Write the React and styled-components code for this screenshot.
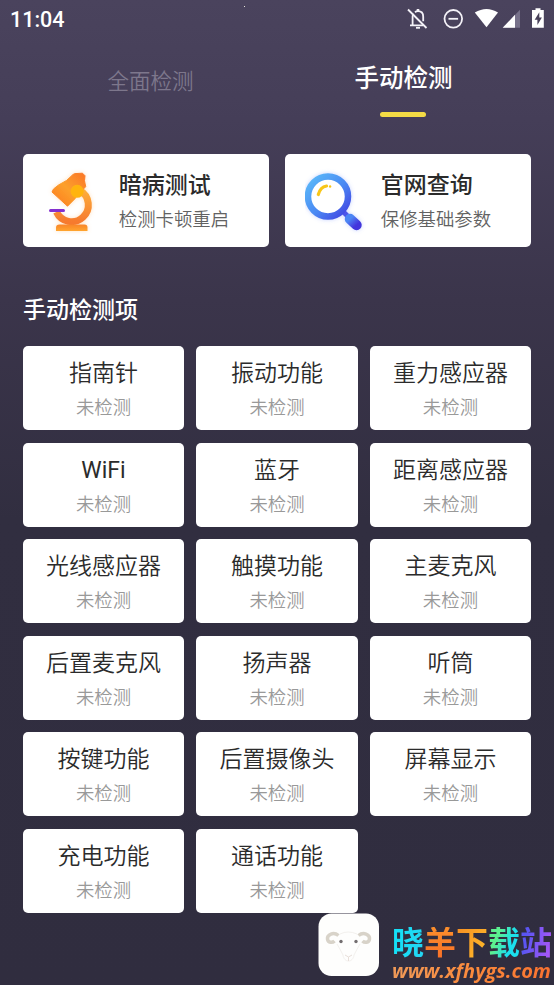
import React from 'react';
import styled, { createGlobalStyle } from 'styled-components';

const GlobalStyle = createGlobalStyle`
  * {
    box-sizing: border-box;
  }
  body {
    margin: 0;
    background: #302d3f;
    font-family: Roboto, 'Noto Sans CJK SC', sans-serif;
  }
`;

const Page = styled.div`
  position: relative;
  width: 554px;
  height: 985px;
  overflow: hidden;
  background: linear-gradient(180deg, #4a435d 0, #453e58 120px, #3b354b 300px, #312e40 520px, #302d3f 100%);
`;

const StatusBar = styled.header`
  display: flex;
  align-items: center;
  justify-content: space-between;
  height: 40px;
  padding: 0 9px 0 10px;
`;
const Clock = styled.div`
  font-size: 21.5px;
  font-weight: 500;
  line-height: 26px;
  color: #ffffff;
`;
const Speck = styled.i`
  position: absolute;
  top: 6px;
  left: 244px;
  width: 1px;
  height: 1px;
  background: #e8e6dc;
`;

const Tabs = styled.nav`
  display: grid;
  grid-template-columns: 1fr 1fr;
  height: 114px;
  padding: 0 24px;
`;
const Tab = styled.div`
  display: flex;
  flex-direction: column;
  align-items: center;
  padding-top: ${(props) => (props.$active ? '21px' : '24px')};
  font-size: ${(props) => (props.$active ? '24.5px' : '21.5px')};
  font-weight: ${(props) => (props.$active ? 500 : 350)};
  line-height: 36px;
  color: ${(props) => (props.$active ? '#ffffff' : '#7d778c')};
`;
const TabLine = styled.span`
  width: 46px;
  height: 5px;
  margin: 15px 2px 0 0;
  border-radius: 3px;
  background: #f4dc45;
`;

const Shortcuts = styled.section`
  display: grid;
  grid-template-columns: 1fr 1fr;
  gap: 16px;
  padding: 0 23px;
`;
const Shortcut = styled.div`
  display: flex;
  align-items: center;
  height: 93px;
  padding-left: 20px;
  border-radius: 5px;
  background: #ffffff;
`;
const ShortcutText = styled.div`
  margin-left: 11.8px;
  padding-top: 5px;
`;
const ShortcutTitle = styled.div`
  font-size: 23px;
  font-weight: 500;
  line-height: 34px;
  color: #2b2b2b;
`;
const ShortcutNote = styled.div`
  font-size: 18.4px;
  font-weight: 350;
  line-height: 34px;
  color: #626262;
`;

const SectionTitle = styled.h2`
  margin: 47px 23px 18.4px;
  font-size: 23px;
  font-weight: 500;
  line-height: 34px;
  color: #ffffff;
`;
const Grid = styled.section`
  display: grid;
  grid-template-columns: repeat(3, 1fr);
  gap: 12.43px;
  padding: 0 23px;
`;
const Item = styled.div`
  height: 84px;
  padding-top: 11px;
  border-radius: 5px;
  background: #ffffff;
  text-align: center;
`;
const ItemName = styled.div`
  font-size: 23px;
  font-weight: ${(props) => (props.$latin ? 400 : 350)};
  line-height: 34px;
  color: #2b2b2b;
`;
const ItemState = styled.div`
  font-size: 18.4px;
  font-weight: 350;
  line-height: 34px;
  color: #999999;
`;

/* site badge floating over the bottom right corner */
const Watermark = styled.div`
  position: absolute;
  left: 318px;
  top: 913px;
  display: flex;
`;
const SiteText = styled.div`
  margin-left: 12px;
  padding-top: 14px;
`;
const SiteName = styled.div`
  display: flex;
  font-size: 32px;
  font-weight: 700;
  line-height: 32px;
`;
const SiteChar = styled.span`
  width: 32px;
  color: transparent;
  background: ${(props) => props.$fill};
  background-clip: text;
`;
const SiteUrl = styled.div`
  padding-right: 4px;
  font-family: 'Open Sans', 'Noto Sans', sans-serif;
  font-size: 20px;
  font-style: italic;
  font-weight: 700;
  line-height: 24px;
  white-space: nowrap;
  color: transparent;
  background: linear-gradient(90deg, #f09a58, #fb8a3c 50%, #f9702f);
  background-clip: text;
`;

const items = [
  '指南针', '振动功能', '重力感应器',
  'WiFi', '蓝牙', '距离感应器',
  '光线感应器', '触摸功能', '主麦克风',
  '后置麦克风', '扬声器', '听筒',
  '按键功能', '后置摄像头', '屏幕显示',
  '充电功能', '通话功能',
];

const siteChars = [
  { char: '晓', fill: 'linear-gradient(100deg, #12e2f8, #25d4f2)' },
  { char: '羊', fill: 'linear-gradient(180deg, #fc8f2c, #f97028)' },
  { char: '下', fill: 'linear-gradient(120deg, #f78e22, #ffbe2c)' },
  { char: '载', fill: 'linear-gradient(110deg, #5cf090 30%, #1be0ee 65%)' },
  { char: '站', fill: 'linear-gradient(100deg, #5a55f2 20%, #b158f8)' },
];

const StatusIcons = () => (
  <svg width="140" height="26" viewBox="405 7 140 26" fill="none">
    <g stroke="#f4f2f8" strokeWidth="1.8">
      <path d="M408 9.5L426.5 28" />
      <path d="M410 25.3h13M412.6 25v-8.500q0-1.500.8-2.800M415 12.200q1.200-1 3-1 5.200 0 5.200 5.500v4.500" />
      <path d="M418 9v2.500" strokeWidth="2.600" />
      <path d="M416 27.800h4" strokeWidth="1.800" />
      <circle cx="453.300" cy="18.800" r="8.800" />
      <path d="M448.500 18.800h9.600" />
    </g>
    <path d="M474.800 12.600q11.800-7.400 23.200 0L486.500 27.200z" fill="#ffffff" />
    <path d="M520 9.800v17.900h-17.300z" fill="#77718a" />
    <path d="M515 14.800v12.900h-12.300z" fill="#ffffff" />
    <path d="M535.500 8.300h5v1.700h3.300v17.700h-11.800V10h3.500z" fill="#ffffff" />
    <path d="M539.300 12.300l-4.600 7.500h2.700v5.300l4.500-7.500h-2.600z" fill="#484059" />
  </svg>
);

const Microscope = () => (
  <svg width="64" height="70" viewBox="43 165 64 70">
    <defs>
      <linearGradient id="arm" x1="0" y1="0" x2="0" y2="1">
        <stop offset="0" stopColor="#fdae3b" />
        <stop offset="1" stopColor="#f67a2e" />
      </linearGradient>
      <linearGradient id="foot" x1="0" y1="0" x2="0" y2="1">
        <stop offset="0" stopColor="#f9852a" />
        <stop offset="1" stopColor="#ffa52e" />
      </linearGradient>
      <linearGradient id="tube" x1="1" y1="0" x2="0" y2="1">
        <stop offset="0" stopColor="#fb7426" />
        <stop offset=".5" stopColor="#fca02c" />
        <stop offset="1" stopColor="#fd781d" />
      </linearGradient>
      <filter id="warmGlow" x="-30%" y="-30%" width="160%" height="160%">
        <feDropShadow dx="0" dy="0" stdDeviation="2" floodColor="#ffb45e" floodOpacity=".4" />
      </filter>
    </defs>
    <g filter="url(#warmGlow)">
      <path d="M80 189.500A16.700 16.700 0 1 1 56.500 211" fill="none" stroke="url(#arm)" strokeWidth="7" />
      <path d="M59.500 223.500h25q3 0 3 3v3.500H56v-3.500q0-3 3.500-3z" fill="url(#foot)" />
      <path d="M66.500 179.500l6.500-6q1.500-1.300 4-1l5.500-.3 2.500 2.500-.5 5 1.200 6-8.700 9-2 3-7.500 7.500L52 191l1.500-3 5-4z" fill="url(#tube)" stroke="url(#tube)" strokeWidth="1" strokeLinejoin="round" />
      <circle cx="77.200" cy="190.300" r="6.500" fill="#ffb411" />
    </g>
    <rect x="49" y="208" width="16" height="3" rx="1.500" fill="#8430cf" />
  </svg>
);

const Magnifier = () => (
  <svg width="64" height="70" viewBox="305.500 165 64 70">
    <defs>
      <linearGradient id="lens" x1="0" y1="0" x2="1" y2="1">
        <stop offset="0" stopColor="#5cbcf9" />
        <stop offset=".55" stopColor="#4a88f3" />
        <stop offset="1" stopColor="#403fe1" />
      </linearGradient>
      <linearGradient id="handle" x1="0" y1="0" x2="1" y2="1">
        <stop offset="0" stopColor="#4c86f4" />
        <stop offset="1" stopColor="#4335dc" />
      </linearGradient>
      <filter id="coolGlow" x="-30%" y="-30%" width="160%" height="160%">
        <feDropShadow dx="0" dy="0" stdDeviation="2" floodColor="#7190ff" floodOpacity=".4" />
      </filter>
    </defs>
    <g filter="url(#coolGlow)">
      <path d="M344 211l6 6" stroke="#4d55ea" strokeWidth="5" />
      <path d="M350.500 218l6.500 6" stroke="url(#handle)" strokeWidth="10.500" strokeLinecap="round" />
      <circle cx="328.500" cy="195.500" r="20" fill="#ffffff" stroke="url(#lens)" strokeWidth="6.500" />
    </g>
    <path d="M318.800 193.500q2-7.500 8.200-8.500" fill="none" stroke="#f8c618" strokeWidth="3.200" strokeLinecap="round" />
    <circle cx="330.600" cy="185.500" r="1.200" fill="#f8c618" />
  </svg>
);

const SheepLogo = () => (
  <svg width="62" height="64" viewBox="0 0 62 64">
    <rect x=".5" y=".5" width="60.500" height="62.500" rx="13" fill="#fefefd" />
    <g fill="none" stroke="#d8d3c9" strokeWidth="3.500">
      <path d="M20.500 22.500c-5-4-11.500-1-11 3.500.5 4 5 4 7 2" />
      <path d="M40.500 22.500c5-4 11.500-1 11 3.500-.5 4-5 4-7 2" />
    </g>
    <g fill="none" stroke="#f3f1ee" strokeWidth="1">
      <path d="M19 31q3 5 6 11c1 8 10 8 11 0q3-6 6-11M22 21q8-4 17 0" />
      <path d="M27 42l3.500 2 3.500-2M30.500 44v4" stroke="#e8dfda" />
    </g>
    <circle cx="23" cy="28.500" r="1.700" fill="#736e70" />
    <circle cx="38" cy="28.500" r="1.700" fill="#736e70" />
  </svg>
);

const App = () => {
  return (
    <React.Fragment>
      <GlobalStyle />
      <Page>
        <StatusBar>
          <Clock>11:04</Clock>
          <StatusIcons />
        </StatusBar>
        <Speck />
        <Tabs>
          <Tab>全面检测</Tab>
          <Tab $active>
            手动检测
            <TabLine />
          </Tab>
        </Tabs>
        <Shortcuts>
          <Shortcut>
            <Microscope />
            <ShortcutText>
              <ShortcutTitle>暗病测试</ShortcutTitle>
              <ShortcutNote>检测卡顿重启</ShortcutNote>
            </ShortcutText>
          </Shortcut>
          <Shortcut>
            <Magnifier />
            <ShortcutText>
              <ShortcutTitle>官网查询</ShortcutTitle>
              <ShortcutNote>保修基础参数</ShortcutNote>
            </ShortcutText>
          </Shortcut>
        </Shortcuts>
        <SectionTitle>手动检测项</SectionTitle>
        <Grid>
          {items.map((name) => (
            <Item key={name}>
              <ItemName $latin={/^\w+$/.test(name)}>{name}</ItemName>
              <ItemState>未检测</ItemState>
            </Item>
          ))}
        </Grid>
        <Watermark>
          <SheepLogo />
          <SiteText>
            <SiteName>
              {siteChars.map((v) => (
                <SiteChar key={v.char} $fill={v.fill}>
                  {v.char}
                </SiteChar>
              ))}
            </SiteName>
            <SiteUrl>www.xfhygs.com</SiteUrl>
          </SiteText>
        </Watermark>
      </Page>
    </React.Fragment>
  );
};

export default App;
